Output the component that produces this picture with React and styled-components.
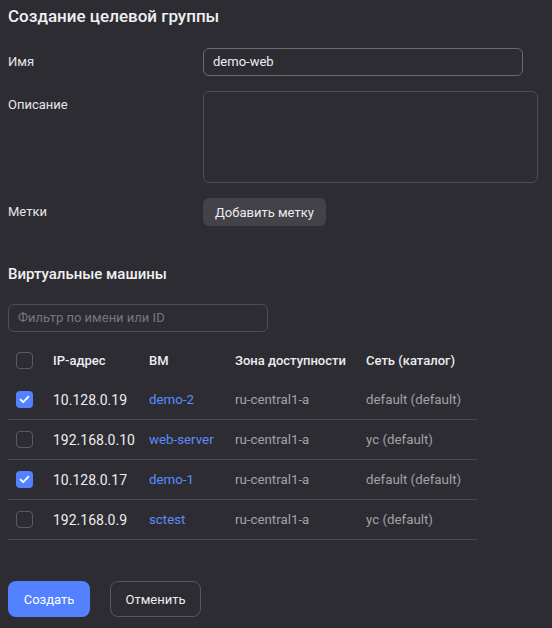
import React from "react";
import styled, { createGlobalStyle } from "styled-components";

const Global = createGlobalStyle`
  html, body { margin: 0; padding: 0; background: #2d2c33; }
  body { font-family: Roboto, "Noto Sans", sans-serif; color: #e6e6e9; -webkit-font-smoothing: antialiased; }
  * { box-sizing: border-box; }
`;

const Page = styled.div`
  width: 552px;
  height: 628px;
  padding: 4px 8px 0;
  overflow: hidden;
`;

const Title = styled.h1`
  margin: 0;
  font-size: 17px;
  line-height: 24px;
  font-weight: 500;
  color: #f0f0f2;
`;

const Form = styled.div`
  display: grid;
  grid-template-columns: 195px 1fr;
  row-gap: 15px;
  margin-top: 20px;
  align-items: start;
`;

const Label = styled.div`
  font-size: 13px;
  line-height: 28px;
  color: #e6e6e9;
`;

const Input = styled.div`
  width: ${(p) => p.$w}px;
  height: ${(p) => p.$h || 28}px;
  border: 1px solid ${(p) => p.$border || "#6a696f"};
  border-radius: 6px;
  padding: 0 9px;
  font-size: 13px;
  line-height: 26px;
  color: ${(p) => (p.$placeholder ? "#77767c" : "#ececef")};
`;

const GreyButton = styled.div`
  display: inline-flex;
  align-items: center;
  height: 28px;
  padding: 0 12px;
  border-radius: 6px;
  background: #434248;
  font-size: 13px;
  color: #ececef;
  width: fit-content;
`;

const Section = styled.h2`
  margin: 37px 0 0;
  font-size: 15px;
  line-height: 22px;
  font-weight: 500;
  color: #f0f0f2;
`;

const Filter = styled(Input)`
  margin-top: 19px;
`;

const Table = styled.div`
  margin-top: 8px;
  width: 469px;
`;

const Row = styled.div`
  display: grid;
  grid-template-columns: 37px 96px 86px 131px 119px;
  height: 40px;
  align-items: center;
  border-bottom: ${(p) => (p.$head ? "none" : "1px solid #4b4a50")};
  font-size: 13px;
`;

const Cell = styled.div`
  padding-left: 8px;
  white-space: nowrap;
  color: ${(p) =>
    p.$kind === "head" ? "#ececef" : p.$kind === "link" ? "#5b8cff" : p.$kind === "muted" ? "#a2a1a7" : "#ececef"};
  font-weight: ${(p) => (p.$kind === "head" ? 500 : 400)};
  font-size: ${(p) => (p.$kind === "num" ? 14 : p.$kind === "head" ? 13 : 13.3)}px;
  display: flex;
  align-items: center;
`;

const Box = styled.div`
  width: 17px;
  height: 17px;
  border-radius: 4px;
  border: ${(p) => (p.$on ? "none" : "1px solid #5c5b61")};
  background: ${(p) => (p.$on ? "#5282ff" : "transparent")};
  display: flex;
  align-items: center;
  justify-content: center;
`;

const Actions = styled.div`
  display: flex;
  gap: 20px;
  margin-top: 41px;
`;

const Button = styled.div`
  height: 36px;
  width: ${(p) => (p.$primary ? 82 : 91)}px;
  display: flex;
  align-items: center;
  justify-content: center;
  border-radius: 8px;
  font-size: 13px;
  color: ${(p) => (p.$primary ? "#ffffff" : "#ececef")};
  background: ${(p) => (p.$primary ? "#5282ff" : "transparent")};
  border: ${(p) => (p.$primary ? "none" : "1px solid #58575d")};
`;

const Check = () => (
  <svg width="11" height="9" viewBox="0 0 11 9">
    <path d="M1.5 4.6 L4.2 7.2 L9.5 1.6" fill="none" stroke="#fff" strokeWidth="1.8" strokeLinecap="round" strokeLinejoin="round" />
  </svg>
);

const rows = [
  { on: true, ip: "10.128.0.19", vm: "demo-2", net: "default (default)" },
  { on: false, ip: "192.168.0.10", vm: "web-server", net: "yc (default)" },
  { on: true, ip: "10.128.0.17", vm: "demo-1", net: "default (default)" },
  { on: false, ip: "192.168.0.9", vm: "sctest", net: "yc (default)" },
];

export default function App() {
  return (
    <Page>
      <Global />
      <Title>Создание целевой группы</Title>
      <Form>
        <Label>Имя</Label>
        <Input $w={320}>demo-web</Input>
        <Label>Описание</Label>
        <Input $w={335} $h={92} $border="#4e4d53" />
        <Label>Метки</Label>
        <GreyButton>Добавить метку</GreyButton>
      </Form>
      <Section>Виртуальные машины</Section>
      <Filter $w={260} $border="#4e4d53" $placeholder>Фильтр по имени или ID</Filter>
      <Table>
        <Row $head>
          <Cell><Box /></Cell>
          <Cell $kind="head">IP-адрес</Cell>
          <Cell $kind="head">ВМ</Cell>
          <Cell $kind="head">Зона доступности</Cell>
          <Cell $kind="head">Сеть (каталог)</Cell>
        </Row>
        {rows.map((r) => (
          <Row key={r.ip}>
            <Cell><Box $on={r.on}>{r.on && <Check />}</Box></Cell>
            <Cell $kind="num">{r.ip}</Cell>
            <Cell $kind="link">{r.vm}</Cell>
            <Cell $kind="muted">ru-central1-a</Cell>
            <Cell $kind="muted">{r.net}</Cell>
          </Row>
        ))}
      </Table>
      <Actions>
        <Button $primary>Создать</Button>
        <Button>Отменить</Button>
      </Actions>
    </Page>
  );
}
